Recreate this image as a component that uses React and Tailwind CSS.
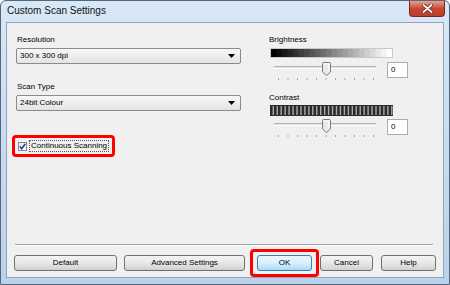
import React from 'react';

const Select = ({ value }) => (
  <div className="ml-[4px] w-[225px] h-[16px] flex items-center justify-between rounded-[2px] border border-[#8b8b8b] bg-gradient-to-b from-[#f7f7f7] to-[#e4e4e4] pl-[3px] pr-[5px]">
    <span className="text-[8px] leading-[10px] text-black">{value}</span>
    <svg width="7" height="4" viewBox="0 0 7 4">
      <path d="M0 0 L7 0 L3.5 4 Z" fill="#000" />
    </svg>
  </div>
);

const Slider = () => (
  <svg width="113" height="19" viewBox="0 0 113 19">
    <rect x="5" y="4" width="102" height="1" fill="#b4b4b4" />
    <rect x="5" y="5" width="102" height="1" fill="#e2e2e2" />
    <rect x="5" y="6" width="102" height="1" fill="#ffffff" />
    {Array.from({ length: 11 }).map((_, i) => (
      <rect key={i} x={9 + i * 9.5} y="16" width="1" height="2" fill="#a8a8a8" />
    ))}
    <path
      d="M53.5 1.5 Q53.5 0.5 54.5 0.5 L60.5 0.5 Q61.5 0.5 61.5 1.5 L61.5 10 L57.5 13.5 L53.5 10 Z"
      fill="#e9e9e9"
      stroke="#7b7b7b"
    />
    <path d="M55 2 L60 2 L60 9" stroke="#ffffff" fill="none" />
  </svg>
);

const BrightnessBar = () => {
  const steps = 22;
  return (
    <svg width="123" height="10" viewBox="0 0 123 10" className="ml-[1px]">
      {Array.from({ length: steps }).map((_, i) => {
        const v = Math.round((i / (steps - 1)) * 255);
        const w = 121 / steps;
        return <rect key={i} x={1 + i * w} y="1" width={w + 0.5} height="8" fill={`rgb(${v},${v},${v})`} />;
      })}
      <rect x="0.5" y="0.5" width="122" height="9" fill="none" stroke="#c9c9c9" />
    </svg>
  );
};

const ContrastBar = () => (
  <svg width="123" height="11" viewBox="0 0 123 11" className="ml-[1px]">
    <rect x="0" y="0" width="123" height="11" fill="#2b2b2b" />
    {Array.from({ length: 31 }).map((_, i) => (
      <rect key={i} x={2.6 + i * 3.95} y="1" width="1.4" height="9" fill="#a9a9a9" />
    ))}
  </svg>
);

const ValueBox = () => (
  <div className="ml-[5px] w-[21px] h-[16px] flex items-center border border-[#abadb3] bg-white pl-[3px] text-[8px] leading-[10px] text-black">
    0
  </div>
);

const Button = ({ label, w, primary }) => (
  <div
    className={
      primary
        ? `${w} h-[16px] flex items-center justify-center rounded-[3px] border border-[#3c7fb1] bg-gradient-to-b from-[#eaf6fd] via-[#d9f0fc] to-[#a7d9f5] text-[8px] leading-[10px] text-black`
        : `${w} h-[16px] flex items-center justify-center rounded-[3px] border border-[#707070] bg-gradient-to-b from-[#f4f4f4] via-[#e8e8e8] to-[#d0d0d0] text-[8px] leading-[10px] text-black`
    }
  >
    {label}
  </div>
);

export default function App() {
  return (
    <div className="w-[450px] h-[285px] bg-white" style={{ fontFamily: '"Liberation Sans", Arial, sans-serif' }}>
      <div className="w-[450px] h-[285px] flex flex-col rounded-t-[6px] border border-[#53667b] bg-gradient-to-b from-[#d9e8f7] via-[#c8dcf1] to-[#bcd2ea] px-[5px] pb-[6px]">
        <div className="h-[21px] flex items-start justify-between">
          <span className="pl-[1px] pt-[4px] text-[10px] leading-[12px] text-[#111]">Custom Scan Settings</span>
          <div className="-mr-[1px] w-[36px] h-[16px] flex items-center justify-center rounded-b-[4px] border border-t-0 border-[#7a2a22] bg-gradient-to-b from-[#e8a093] via-[#c9462f] to-[#b8402c]">
            <svg width="11" height="9" viewBox="0 0 11 9">
              <path d="M1.5 1 L9.5 8 M9.5 1 L1.5 8" stroke="#5a1f18" strokeWidth="3.2" strokeLinecap="round" />
              <path d="M1.5 1 L9.5 8 M9.5 1 L1.5 8" stroke="#ffffff" strokeWidth="1.8" strokeLinecap="round" />
            </svg>
          </div>
        </div>

        <div className="flex-1 flex flex-col border border-[#8fa3b9] bg-[#f0f0f0]">
          <div className="flex pt-[11px]">
            <div className="ml-[5px] w-[230px] flex flex-col">
              <div className="pl-[5px] h-[12px] text-[8px] leading-[12px] text-black mb-[2px]">Resolution</div>
              <Select value="300 x 300 dpi" />
              <div className="mt-[17px] pl-[5px] h-[12px] text-[8px] leading-[12px] text-black mb-[2px]">Scan Type</div>
              <Select value="24bit Colour" />

              <div className="mt-[24px] w-[103px] h-[22px] flex items-center rounded-[4px] border-[3px] border-[#ff0000] pl-[3px]">
                <div className="w-[9px] h-[9px] flex items-center justify-center border border-[#7a8a9c] bg-gradient-to-b from-[#e6eaef] to-[#fcfcfc]">
                  <svg width="7" height="7" viewBox="0 0 7 7">
                    <path d="M0.8 3.6 L2.7 5.7 L6.2 0.9" stroke="#21348a" strokeWidth="1.5" fill="none" />
                  </svg>
                </div>
                <span className="ml-[2px] border border-dotted border-[#555] px-[1px] text-[8px] leading-[10px] text-black">
                  Continuous Scanning
                </span>
              </div>
            </div>

            <div className="ml-[27px] w-[141px] flex flex-col">
              <div className="h-[12px] text-[8px] leading-[12px] text-black mb-[2px]">Brightness</div>
              <BrightnessBar />
              <div className="mt-[4px] flex items-start">
                <Slider />
                <ValueBox />
              </div>
              <div className="mt-[11px] h-[12px] text-[8px] leading-[12px] text-black mb-[1px]">Contrast</div>
              <ContrastBar />
              <div className="mt-[3px] flex items-start">
                <Slider />
                <ValueBox />
              </div>
            </div>
          </div>

          <div className="mt-auto ml-[8px] mr-[10px] h-[2px] border-t border-[#a0a0a0] border-b border-b-white" />

          <div className="mt-[3px] h-[28px] flex items-center pl-[7px]">
            <Button label="Default" w="w-[103px]" />
            <div className="ml-[7px]">
              <Button label="Advanced Settings" w="w-[121px]" />
            </div>
            <div className="ml-[5px] w-[69px] h-[28px] flex items-center justify-center rounded-[4px] border-[3px] border-[#ff0000]">
              <Button label="OK" w="w-[55px]" primary />
            </div>
            <div className="ml-[1px]">
              <Button label="Cancel" w="w-[53px]" />
            </div>
            <div className="ml-[8px]">
              <Button label="Help" w="w-[55px]" />
            </div>
          </div>
        </div>
      </div>
    </div>
  );
}
